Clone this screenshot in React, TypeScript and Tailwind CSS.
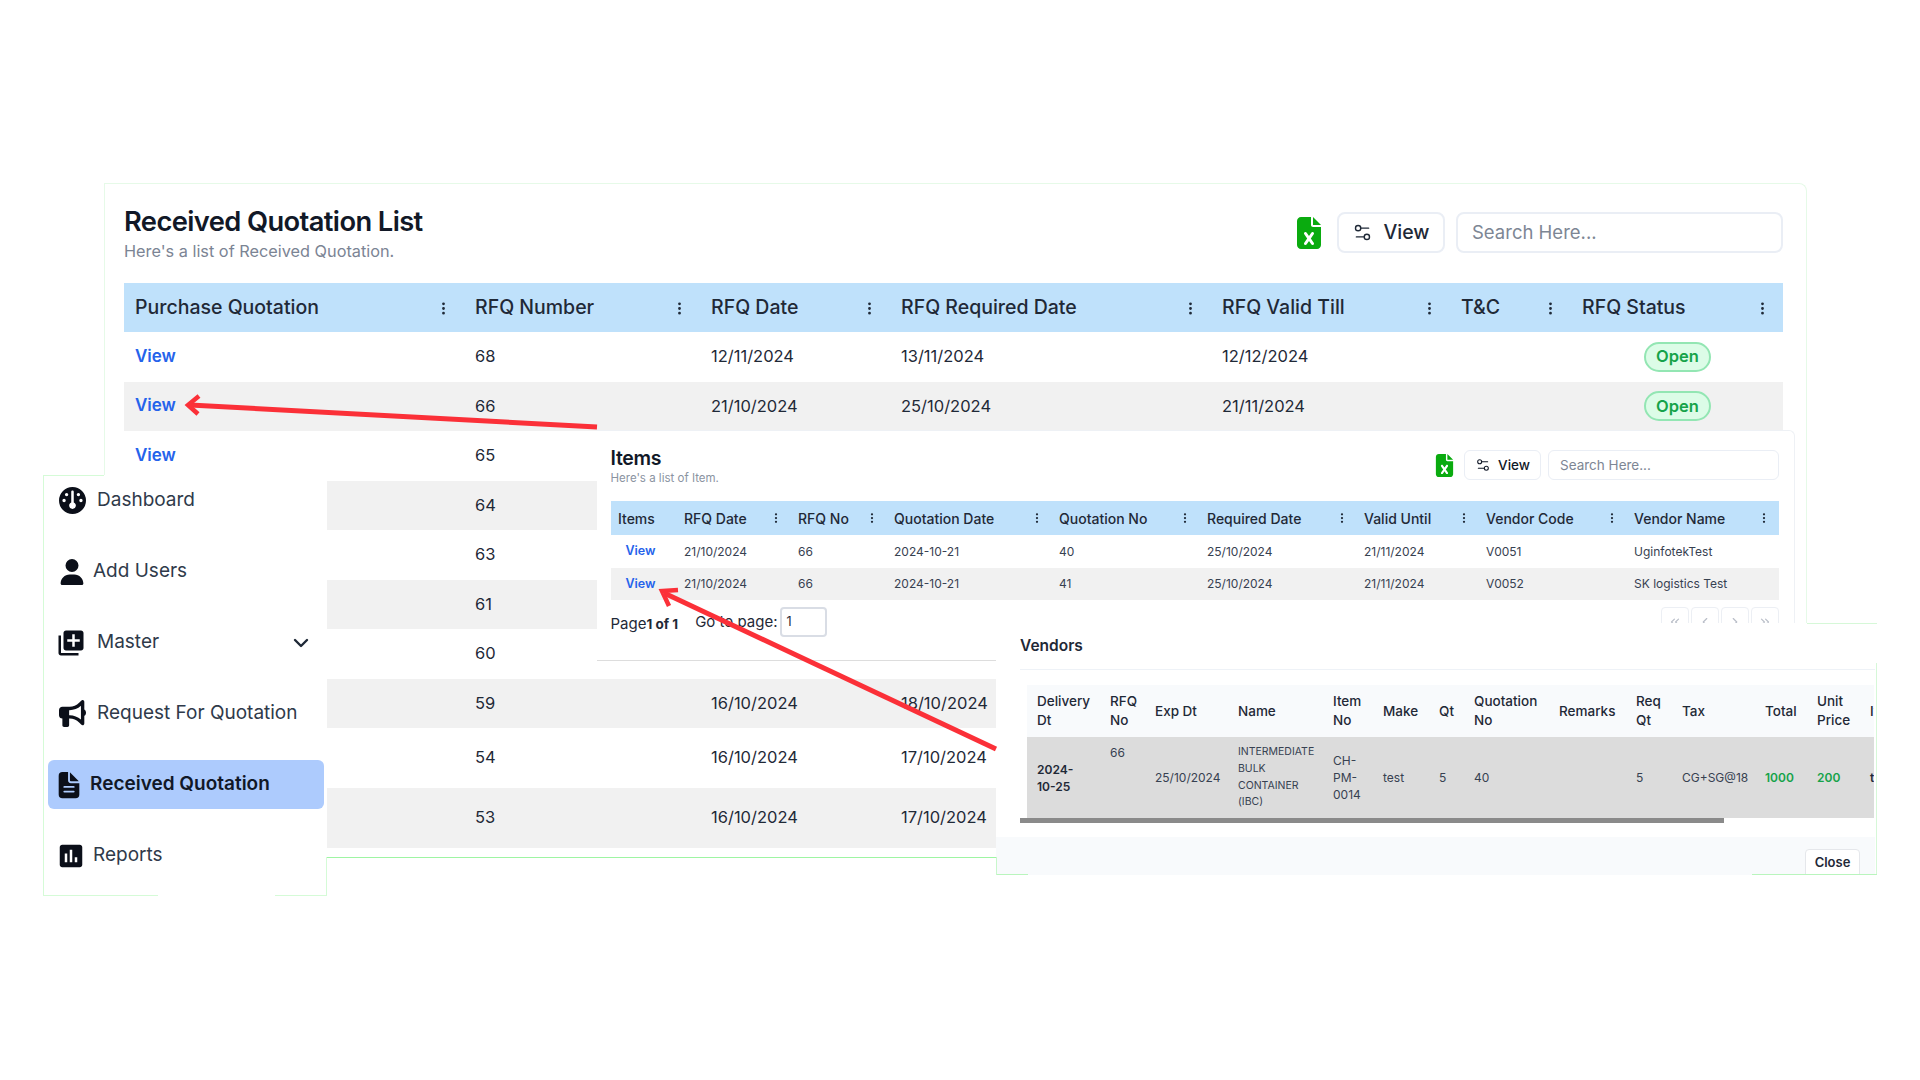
import { ChevronDown, ChevronLeft, ChevronRight, ChevronsLeft, ChevronsRight, Settings2 } from "lucide-react";
import { BsThreeDotsVertical } from "react-icons/bs";
import { FaBullhorn, FaFileExcel, FaGauge, FaUser } from "react-icons/fa6";
import { IoDocumentText } from "react-icons/io5";
import { MdInsertChart, MdLibraryAdd } from "react-icons/md";

const mainCols = "grid grid-cols-[340px_236px_190px_321px_239px_121px_212px]";
const itemCols = "grid grid-cols-[66px_114px_96px_165px_148px_157px_122px_148px_152px]";
const vendorCols = "grid grid-cols-[73px_45px_83px_95px_50px_56px_35px_85px_77px_46px_83px_52px_53px_80px]";

const mainHead = ["Purchase Quotation", "RFQ Number", "RFQ Date", "RFQ Required Date", "RFQ Valid Till", "T&C", "RFQ Status"];

const mainRows = [
  { h: "h-[50px]", bg: "bg-white", view: true, no: "68", date: "12/11/2024", req: "13/11/2024", valid: "12/12/2024", open: true },
  { h: "h-[49px]", bg: "bg-[#f1f1f1]", view: true, no: "66", date: "21/10/2024", req: "25/10/2024", valid: "21/11/2024", open: true },
  { h: "h-[50px]", bg: "bg-white", view: true, no: "65" },
  { h: "h-[49px]", bg: "bg-[#f1f1f1]", no: "64" },
  { h: "h-[50px]", bg: "bg-white", no: "63" },
  { h: "h-[49px]", bg: "bg-[#f1f1f1]", no: "61" },
  { h: "h-[50px]", bg: "bg-white", no: "60" },
  { h: "h-[49px]", bg: "bg-[#f1f1f1]", no: "59", date: "16/10/2024", req: "18/10/2024" },
  { h: "h-[60px]", bg: "bg-white", no: "54", date: "16/10/2024", req: "17/10/2024" },
  { h: "h-[60px]", bg: "bg-[#f1f1f1]", no: "53", date: "16/10/2024", req: "17/10/2024" },
];

const itemHead = ["Items", "RFQ Date", "RFQ No", "Quotation Date", "Quotation No", "Required Date", "Valid Until", "Vendor Code", "Vendor Name"];

const itemRows = [
  { no: "40", code: "V0051", vendor: "UginfotekTest", bg: "bg-white h-[33px]" },
  { no: "41", code: "V0052", vendor: "SK logistics Test", bg: "bg-[#f1f1f1] h-[32px]" },
];

const navItems = [
  { label: "Dashboard", icon: <FaGauge size={27} />, box: "w-[38px]", text: "font-normal" },
  { label: "Add Users", icon: <FaUser size={26} />, box: "w-[34px]", text: "font-normal" },
  { label: "Master", icon: <MdLibraryAdd size={30} className="-ml-[3px]" />, box: "w-[38px]", text: "font-normal", chevron: true },
  { label: "Request For Quotation", icon: <FaBullhorn size={27} />, box: "w-[38px]", text: "font-normal" },
  { label: "Received Quotation", icon: <IoDocumentText size={30} className="-ml-[5px]" />, box: "w-[31px]", text: "font-semibold text-[#111827]", active: true },
  { label: "Reports", icon: <MdInsertChart size={30} className="-ml-[3px]" />, box: "w-[34px]", text: "font-normal" },
];

function Kebab({ size = 15 }: { size?: number }) {
  return <BsThreeDotsVertical size={size} className="shrink-0 text-[#1f2937]" />;
}

function OpenBadge() {
  return (
    <span className="flex h-[30px] w-[67px] items-center justify-center rounded-full border-2 border-[#93e6b3] bg-[#dcfce7] text-[16.5px] font-semibold text-[#16a34a]">
      Open
    </span>
  );
}

function ViewButton({ small }: { small?: boolean }) {
  return (
    <button
      className={
        small
          ? "flex h-[30px] w-[77px] items-center justify-center gap-[7px] rounded-[6px] border border-[#eaeef5] text-[13.5px] font-medium text-[#111827]"
          : "flex h-[41px] w-[108px] items-center justify-center gap-[10px] rounded-[8px] border-2 border-[#eaeef5] text-[19.5px] font-medium text-[#1f2937]"
      }
    >
      <Settings2 size={small ? 16 : 21} strokeWidth={1.6} />
      View
    </button>
  );
}

function MainPanel() {
  return (
    <section className="absolute left-[104px] top-[183px] h-[675px] w-[1703px] rounded-tr-[8px] border border-[#e6fae8] border-b-[#9ef5a3] bg-white px-[19px]">
      <div className="mt-[28px] flex h-[41px] w-[1659px] items-start justify-between">
        <div>
          <h1 className="-mt-[6px] text-[27.3px] font-semibold leading-[32px] tracking-[-0.6px] text-[#111827]">Received Quotation List</h1>
          <p className="text-[16.3px] leading-[26px] text-[#7b8494]">Here's a list of Received Quotation.</p>
        </div>
        <div className="flex items-center">
          <FaFileExcel size={32} className="mr-[12px] text-[#0aab0f]" />
          <ViewButton />
          <div className="ml-[11px] flex h-[41px] w-[327px] items-center rounded-[8px] border-2 border-[#eaeef5] px-[14px] text-[18.5px] text-[#7d8694]">
            Search Here...
          </div>
        </div>
      </div>

      <div className="mt-[30px] w-[1659px]">
        <div className={`${mainCols} h-[49px] items-center bg-[#bfe1fb]`}>
          {mainHead.map((h) => (
            <div key={h} className="flex items-center justify-between pl-[11px] pr-[13px] pt-px text-[19.5px] font-medium text-[#1f2937]">
              {h}
              <Kebab />
            </div>
          ))}
        </div>
        {mainRows.map((r) => (
          <div key={r.no} className={`${mainCols} ${r.h} ${r.bg} items-center pb-px text-[16.5px] text-[#1f2937]`}>
            <div className="pl-[11px] text-[17px] font-semibold text-[#2563eb]">{r.view && "View"}</div>
            <div className="pl-[11px]">{r.no}</div>
            <div className="pl-[11px]">{r.date}</div>
            <div className="pl-[11px]">{r.req}</div>
            <div className="pl-[11px]">{r.valid}</div>
            <div />
            <div className="pl-[73px]">{r.open && <OpenBadge />}</div>
          </div>
        ))}
      </div>
    </section>
  );
}

function ItemsPanel() {
  return (
    <section className="absolute left-[597px] top-[430px] h-[231px] w-[1198px] rounded-tr-[6px] border-b border-r border-t border-[#eef1f5] border-b-[#dddddd] bg-white pl-[13.5px] pr-[15px]">
      <div className="mt-[19px] flex h-[31px] items-start justify-between">
        <div>
          <h2 className="-mt-[2px] text-[19.5px] font-semibold leading-[20px] tracking-[-0.3px] text-[#111827]">Items</h2>
          <p className="text-[11.5px] leading-[20px] text-[#8a93a1]">Here's a list of Item.</p>
        </div>
        <div className="flex items-center">
          <FaFileExcel size={23} className="mr-[8px] text-[#0aab0f]" />
          <ViewButton small />
          <div className="ml-[7px] flex h-[30px] w-[231px] items-center rounded-[6px] border border-[#eaeef5] px-[11px] text-[13.5px] text-[#7d8694]">
            Search Here...
          </div>
        </div>
      </div>

      <div className="mt-[20px]">
        <div className={`${itemCols} h-[34px] items-center bg-[#bfe1fb]`}>
          {itemHead.map((h, i) => (
            <div key={h} className="flex items-center justify-between pl-[7.5px] pr-[9px] text-[14px] font-medium text-[#1f2937]">
              {h}
              {i > 0 && <Kebab size={12} />}
            </div>
          ))}
        </div>
        {itemRows.map((r) => (
          <div key={r.no} className={`${itemCols} ${r.bg} items-center text-[12px] text-[#374151]`}>
            <div className="pl-[15px] text-[12.5px] font-semibold text-[#2563eb]">View</div>
            <div className="pl-[7.5px]">21/10/2024</div>
            <div className="pl-[7.5px]">66</div>
            <div className="pl-[7.5px]">2024-10-21</div>
            <div className="pl-[7.5px]">{r.no}</div>
            <div className="pl-[7.5px]">25/10/2024</div>
            <div className="pl-[7.5px]">21/11/2024</div>
            <div className="pl-[7.5px]">{r.code}</div>
            <div className="pl-[7.5px]">{r.vendor}</div>
          </div>
        ))}
      </div>

      <div className="mt-[7px] flex items-start justify-between">
        <div className="flex items-center text-[15px] text-[#1f2937]">
          <span className="pt-[4px]">
            Page<b className="text-[13.5px] font-bold">1 of 1</b>
          </span>
          <span className="ml-[17px]">Go to page:</span>
          <div className="ml-[2px] flex h-[30px] w-[47px] items-center rounded-[4px] border-2 border-[#d9dde5] pl-[5px] text-[12.5px]">1</div>
        </div>
        <div className="flex gap-[2px]">
          {[ChevronsLeft, ChevronLeft, ChevronRight, ChevronsRight].map((Icon, i) => (
            <div key={i} className="flex h-[30px] w-[28px] items-center justify-center rounded-[4px] border border-[#eceff4] text-[#b9bec8]">
              <Icon size={14} />
            </div>
          ))}
        </div>
      </div>
    </section>
  );
}

function VendorsPanel() {
  return (
    <section className="absolute left-[996px] top-[623px] h-[252px] w-[881px] bg-white text-[#374151]">
      <div className="ml-[24px] mr-[2px] flex h-[47px] items-center border-b border-[#eef2f7] text-[15.5px] font-semibold text-[#1f2937]">
        Vendors
      </div>
      <div className="ml-[31px] mr-[3px] mt-[15px] overflow-hidden">
        <div className={`${vendorCols} h-[52px] w-max items-center bg-[#f8fafc] text-[13.5px] font-medium leading-[19px] text-[#1f2937]`}>
          {["Delivery Dt", "RFQ No", "Exp Dt", "Name", "Item No", "Make", "Qt", "Quotation No", "Remarks", "Req Qt", "Tax", "Total", "Unit Price", "Item"].map((h) => (
            <div key={h} className="pl-[10px] pr-[4px]">
              {h}
            </div>
          ))}
        </div>
        <div className={`${vendorCols} h-[81px] w-max items-center bg-[#dcdcdc] text-[12px] leading-[17px]`}>
          <div className="pl-[10px] pr-[18px] font-semibold text-[#1f2937]">2024-10-25</div>
          <div className="self-start pl-[10px] pt-[7px]">66</div>
          <div className="pl-[10px]">25/10/2024</div>
          <div className="pl-[10px] text-[10.5px] leading-[16.7px]">INTERMEDIATE BULK CONTAINER (IBC)</div>
          <div className="pl-[10px] pr-[4px]">CH-PM-0014</div>
          <div className="pl-[10px]">test</div>
          <div className="pl-[10px]">5</div>
          <div className="pl-[10px]">40</div>
          <div />
          <div className="pl-[10px]">5</div>
          <div className="pl-[10px]">CG+SG@18</div>
          <div className="pl-[10px] font-semibold text-[#16a34a]">1000</div>
          <div className="pl-[10px] font-semibold text-[#16a34a]">200</div>
          <div className="pl-[10px] font-semibold text-[#1f2937]">test</div>
        </div>
      </div>
      <div className="ml-[24px] h-[5px] w-[704px] bg-[#8a8a8a]" />
      <div className="mr-[2px] mt-[14px] flex h-[38px] items-start justify-end overflow-hidden bg-[#f8fafc] pr-[15px] pt-[12px]">
        <button className="h-[34px] w-[55px] rounded-[4px] border border-[#e5e7eb] bg-white pb-[6px] text-[13px] font-semibold text-[#1f2937]">Close</button>
      </div>

      {/* leftovers of the pasted screenshot's green outline */}
      <div className="absolute left-[811px] top-0 h-px w-[70px] bg-[#d6f8d8]" />
      <div className="absolute right-0 top-[40px] h-[212px] w-px bg-[#d6f8d8]" />
      <div className="absolute bottom-0 right-0 h-px w-[125px] bg-[#b9f5bd]" />
      <div className="absolute bottom-0 left-0 h-px w-[32px] bg-[#b9f5bd]" />
      <div className="absolute left-0 top-[234px] h-[18px] w-px bg-[#c8f7cb]" />
    </section>
  );
}

function Sidebar() {
  return (
    <aside className="absolute left-[43px] top-[475px] flex h-[421px] w-[284px] flex-col gap-[22px] border-b border-l border-[#d5fbd7] bg-white pl-[4px] pr-[3px] pt-px text-[#2f3a4a]">
      {navItems.map((n) => (
        <div
          key={n.label}
          className={`flex h-[49px] shrink-0 items-center rounded-[6px] pl-[11px] pr-[11px] ${n.active ? "bg-[#adcbfd]" : ""}`}
        >
          <div className={`${n.box} flex shrink-0 items-center text-[#0b0f19]`}>{n.icon}</div>
          <span className={`pb-px text-[19px] ${n.text}`}>{n.label}</span>
          {n.chevron && <ChevronDown size={24} strokeWidth={2.4} className="ml-auto text-[#1f2937]" />}
        </div>
      ))}
      <div className="absolute left-[-1px] top-0 h-px w-[61px] bg-[#d5fbd7]" />
      <div className="absolute bottom-[-1px] left-[114px] h-px w-[117px] bg-white" />
      <div className="absolute bottom-0 right-0 h-[38px] w-px bg-[#d5fbd7]" />
    </aside>
  );
}

function Arrows() {
  return (
    <svg className="pointer-events-none absolute left-0 top-0" width="1920" height="1080" viewBox="0 0 1920 1080" fill="none" stroke="#fb3038" strokeWidth="5">
      <path d="M597 427 L190 405" />
      <path d="M199 396 L188 405 L198 414" strokeWidth="4.5" />
      <path d="M996 749 L664 593" />
      <path d="M678 590 L662 591 L669 606" strokeWidth="4.5" />
    </svg>
  );
}

export default function App() {
  return (
    <div className="relative h-[1080px] w-[1920px] overflow-hidden bg-white font-['Inter',sans-serif]">
      <MainPanel />
      <ItemsPanel />
      <VendorsPanel />
      <Sidebar />
      <Arrows />
    </div>
  );
}
